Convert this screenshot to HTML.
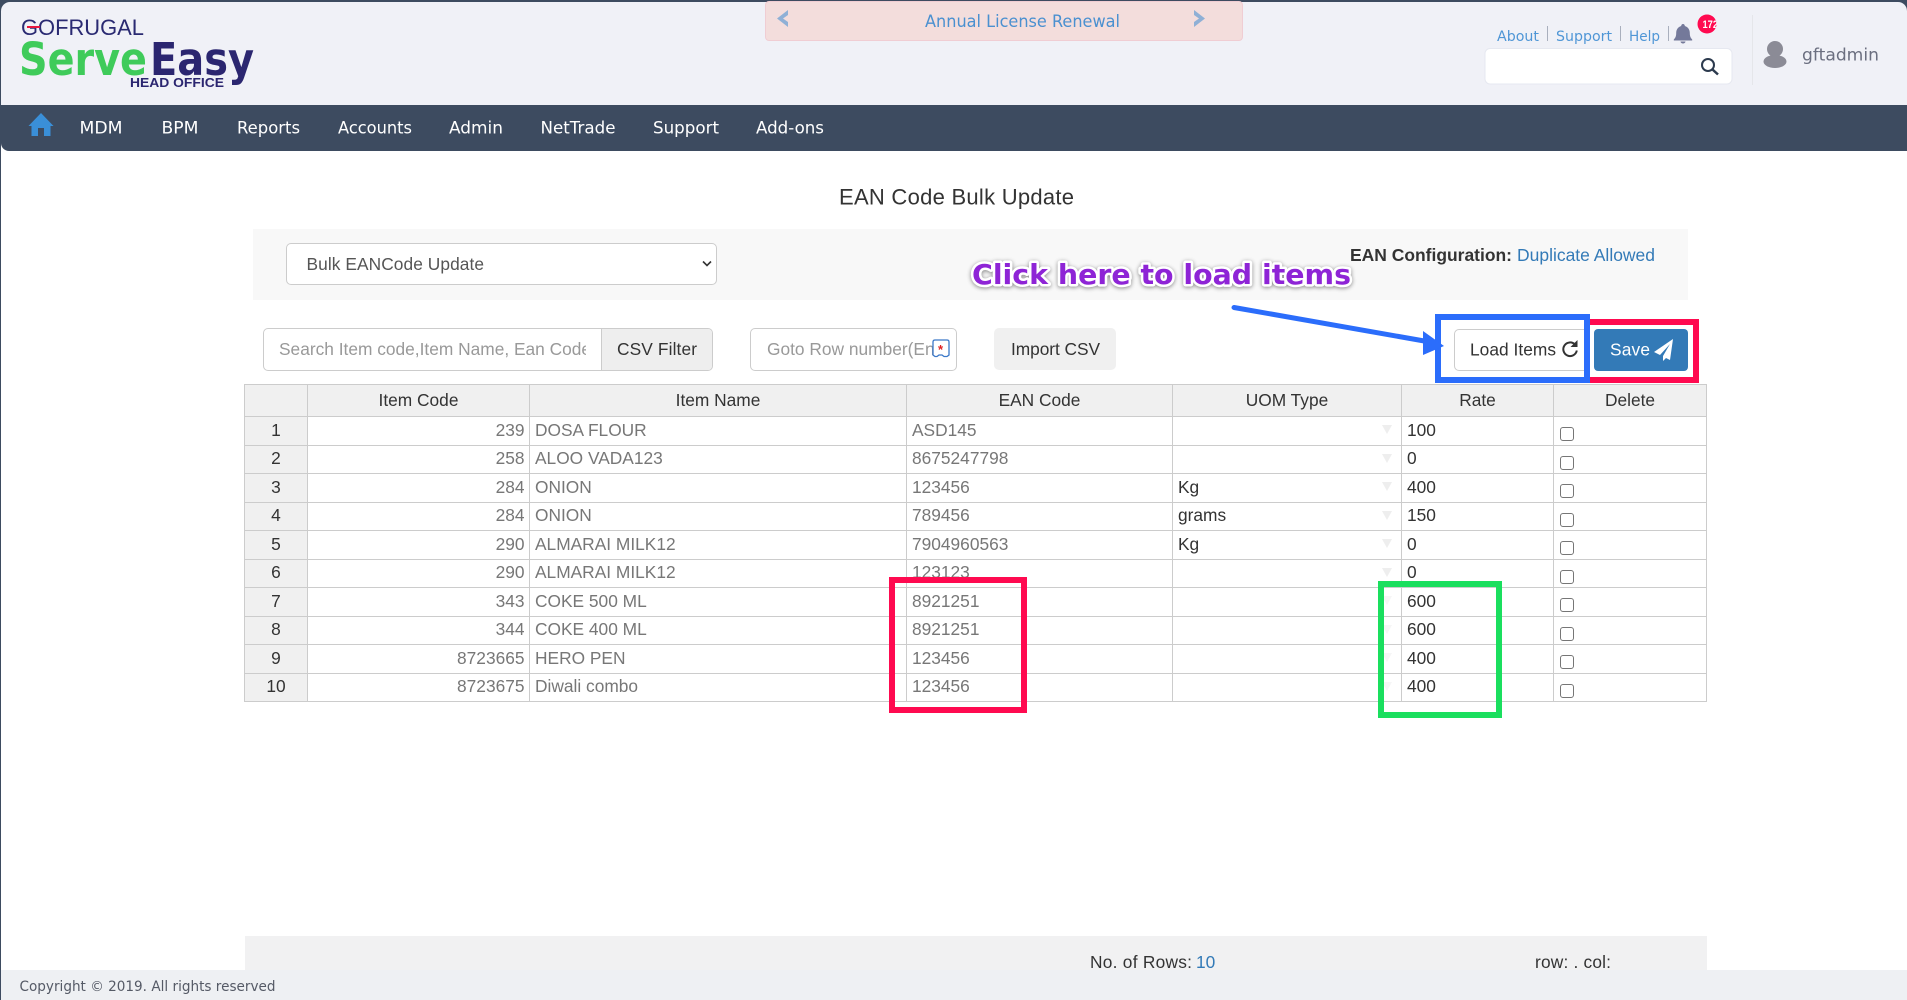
<!DOCTYPE html>
<html><head><meta charset="utf-8"><title>EAN Code Bulk Update</title>
<style>
html,body{margin:0;padding:0;width:1907px;height:1000px;overflow:hidden;background:#fff;font-family:"Liberation Sans",Arial,sans-serif;color:#333}
.a{position:absolute;box-sizing:border-box}
svg{position:absolute;left:0;top:0;overflow:visible}
table{position:absolute;left:244px;top:384px;border-collapse:collapse;table-layout:fixed;width:1462px;font-size:17.33px}
td,th{border:1.3px solid #ccc;padding:0 5px;overflow:hidden;white-space:nowrap;position:relative;font-weight:400;box-sizing:border-box}
td>span{position:relative;top:-1px}
th{background:#f0f0f0;text-align:center;color:#333;height:32px}
td.n{background:#f0f0f0;text-align:center;color:#333}
td.r{text-align:right;color:#777;padding-right:4.5px}
td.g{color:#777}
td i{position:absolute;left:209px;top:8px;width:0;height:0;border-left:5px solid transparent;border-right:5px solid transparent;border-top:9px solid #eee}
tr.f td i{border-top-color:#f6f6f6}
td b{position:absolute;left:6px;top:50%;margin-top:-4px;width:14px;height:14px;border:1.4px solid #767676;border-radius:3px;background:#fff;box-sizing:border-box}
tr.h1 td{height:29px}tr.h2 td{height:28px}
.ph{color:#999;font-size:17.33px;white-space:nowrap;overflow:hidden}
</style></head><body>
<div class="a" style="left:0;top:0;width:1907px;height:106px;background:#3d4b60"></div>
<div class="a" style="left:1px;top:2px;width:1906px;height:104px;background:#f0f1f7;border-radius:9px 9px 0 0"></div>
<div class="a" style="left:1px;top:105px;width:1906px;height:46px;background:#3d4b60;border-radius:0 0 0 8px"></div>
<div class="a" style="left:0;top:106px;width:1px;height:894px;background:#3d4b60"></div>

<div class="a" style="left:765px;top:1px;width:478px;height:40px;background:#f3dddc;border:1px solid #f0cdd3;border-radius:4px"></div>
<div class="a" style="left:253px;top:229px;width:1435px;height:71px;background:#f8f8f8"></div>
<div class="a" style="left:286px;top:243px;width:431px;height:42px;background:#fff;border:1px solid #ccc;border-radius:5px"></div>
<div class="a" style="left:263px;top:328px;width:450px;height:43px;background:#fff;border:1px solid #ccc;border-radius:5px;overflow:hidden"><div class="a" style="left:337px;top:0;width:113px;height:43px;background:#eee;border-left:1px solid #ccc"></div></div>
<div class="a" style="left:750px;top:328px;width:207px;height:43px;background:#fff;border:1px solid #ccc;border-radius:5px"></div>
<div class="a" style="left:994px;top:328px;width:122px;height:42px;background:#f0f0f0;border-radius:5px"></div>
<div class="a" style="left:1454px;top:329px;width:136px;height:42px;background:#fff;border:1px solid #ccc;border-radius:5px"></div>
<div class="a" style="left:1594px;top:329px;width:94px;height:42px;background:#337ab7;border-radius:4px"></div>

<div class="a ph" style="left:279px;top:339px;width:307px;line-height:20px">Search Item code,Item Name, Ean Code</div>
<div class="a ph" style="left:767px;top:339px;width:172px;line-height:20px">Goto Row number(Enter)</div>

<table>
<colgroup><col style="width:63px"><col style="width:222px"><col style="width:377px"><col style="width:266px"><col style="width:229px"><col style="width:152px"><col style="width:153px"></colgroup>
<tr><th></th><th>Item Code</th><th>Item Name</th><th>EAN Code</th><th>UOM Type</th><th>Rate</th><th>Delete</th></tr>
<tr class="h1"><td class="n"><span>1</span></td><td class="r"><span>239</span></td><td class="g"><span>DOSA FLOUR</span></td><td class="g"><span>ASD145</span></td><td><i></i></td><td><span>100</span></td><td><b></b></td></tr>
<tr class="h2"><td class="n"><span>2</span></td><td class="r"><span>258</span></td><td class="g"><span>ALOO VADA123</span></td><td class="g"><span>8675247798</span></td><td><i></i></td><td><span>0</span></td><td><b></b></td></tr>
<tr class="h1"><td class="n"><span>3</span></td><td class="r"><span>284</span></td><td class="g"><span>ONION</span></td><td class="g"><span>123456</span></td><td><span>Kg</span><i></i></td><td><span>400</span></td><td><b></b></td></tr>
<tr class="h2"><td class="n"><span>4</span></td><td class="r"><span>284</span></td><td class="g"><span>ONION</span></td><td class="g"><span>789456</span></td><td><span>grams</span><i></i></td><td><span>150</span></td><td><b></b></td></tr>
<tr class="h1"><td class="n"><span>5</span></td><td class="r"><span>290</span></td><td class="g"><span>ALMARAI MILK12</span></td><td class="g"><span>7904960563</span></td><td><span>Kg</span><i></i></td><td><span>0</span></td><td><b></b></td></tr>
<tr class="h2"><td class="n"><span>6</span></td><td class="r"><span>290</span></td><td class="g"><span>ALMARAI MILK12</span></td><td class="g"><span>123123</span></td><td><i></i></td><td><span>0</span></td><td><b></b></td></tr>
<tr class="h1 f"><td class="n"><span>7</span></td><td class="r"><span>343</span></td><td class="g"><span>COKE 500 ML</span></td><td class="g"><span>8921251</span></td><td><i></i></td><td><span>600</span></td><td><b></b></td></tr>
<tr class="h2 f"><td class="n"><span>8</span></td><td class="r"><span>344</span></td><td class="g"><span>COKE 400 ML</span></td><td class="g"><span>8921251</span></td><td><i></i></td><td><span>600</span></td><td><b></b></td></tr>
<tr class="h1 f"><td class="n"><span>9</span></td><td class="r"><span>8723665</span></td><td class="g"><span>HERO PEN</span></td><td class="g"><span>123456</span></td><td><i></i></td><td><span>400</span></td><td><b></b></td></tr>
<tr class="h2 f"><td class="n"><span>10</span></td><td class="r"><span>8723675</span></td><td class="g"><span>Diwali combo</span></td><td class="g"><span>123456</span></td><td><i></i></td><td><span>400</span></td><td><b></b></td></tr>
</table>

<div class="a" style="left:245px;top:936px;width:1462px;height:34px;background:#f1f1f2"></div>
<div class="a" style="left:1px;top:970px;width:1906px;height:30px;background:#eef0f3"></div>

<svg width="1907" height="1000" viewBox="0 0 1907 1000" font-family="Liberation Sans, Arial, sans-serif">
<!-- logo -->
<text x="21" y="35" font-size="22" fill="#2a2a72" textLength="123" lengthAdjust="spacingAndGlyphs">GOFRUGAL</text>
<rect x="27" y="26" width="13" height="2" fill="#e8173f"/>
<text x="19" y="75" font-family="DejaVu Sans, sans-serif" font-size="45" font-weight="700" fill="#3fcb5a" textLength="128" lengthAdjust="spacingAndGlyphs">Serve</text>
<text x="150" y="75" font-family="DejaVu Sans, sans-serif" font-size="45" font-weight="700" fill="#2b2670" textLength="104" lengthAdjust="spacingAndGlyphs">Easy</text>
<text x="130" y="87" font-size="12.5" font-weight="700" fill="#2b2670" textLength="94" lengthAdjust="spacingAndGlyphs">HEAD OFFICE</text>

<!-- banner -->
<path d="M788 10 L777 18.5 L788 27 L788 22 L783 18.5 L788 15Z" fill="#8fb0d6"/>
<path d="M1194 10 L1205 18.5 L1194 27 L1194 22 L1199 18.5 L1194 15Z" fill="#8fb0d6"/>
<text x="925" y="27" font-family="DejaVu Sans, sans-serif" font-size="16.5" fill="#4a90d0" textLength="195" lengthAdjust="spacingAndGlyphs">Annual License Renewal</text>

<!-- top right -->
<g font-family="DejaVu Sans, sans-serif" font-size="14.5" fill="#4f96d6">
<text x="1497" y="41" textLength="42" lengthAdjust="spacingAndGlyphs">About</text>
<text x="1556" y="41" textLength="56" lengthAdjust="spacingAndGlyphs">Support</text>
<text x="1629" y="41" textLength="31" lengthAdjust="spacingAndGlyphs">Help</text>
</g>
<g stroke="#a9afbd" stroke-width="1"><line x1="1547.5" y1="26" x2="1547.5" y2="41"/><line x1="1620.5" y1="26" x2="1620.5" y2="41"/><line x1="1668.5" y1="26" x2="1668.5" y2="41"/></g>
<path d="M1683 24 a1.8 1.8 0 0 1 1.8 2 c3.5 1 5 4 5 7 c0 3.5 1 5 2.4 6.5 v1 h-18.4 v-1 c1.4-1.500 2.400-3 2.400-6.500 c0-3 1.500-6 5-7 a1.800 1.800 0 0 1 1.800-2z M1680.500 41.500 h5 a2.500 2 0 0 1-5 0z" fill="#74799a"/>
<circle cx="1707" cy="24" r="9.500" fill="#ff0a50"/>
<clipPath id="bc"><circle cx="1707" cy="24" r="9.500"/></clipPath>
<text x="1702.500" y="28" font-size="11" font-weight="700" fill="#fff" clip-path="url(#bc)" textLength="15.500" lengthAdjust="spacingAndGlyphs">172</text>
<rect x="1485" y="48.500" width="247" height="35.500" rx="5" fill="#fff" stroke="#e6e8f0"/>
<circle cx="1708" cy="65" r="6" fill="none" stroke="#2c3a4e" stroke-width="2"/><line x1="1712.500" y1="69.500" x2="1718" y2="74.500" stroke="#2c3a4e" stroke-width="2.500"/>
<line x1="1752.500" y1="15" x2="1752.500" y2="85" stroke="#e5e6ea"/>
<circle cx="1775" cy="49" r="8" fill="#8b8b96"/><ellipse cx="1775" cy="61.500" rx="11.500" ry="6.500" fill="#8b8b96"/>
<text x="1802" y="60.500" font-family="DejaVu Sans, sans-serif" font-size="17" fill="#6b6f80" textLength="77" lengthAdjust="spacingAndGlyphs">gftadmin</text>

<!-- nav -->
<path d="M41 113 L53.500 126 H50.500 V136 H44 V128 H38 V136 H31.500 V126 H28.500Z" fill="#3a8fd8"/>
<g font-family="DejaVu Sans, sans-serif" font-size="16.600" fill="#fff">
<text x="79.500" y="133.500" textLength="43" lengthAdjust="spacingAndGlyphs">MDM</text>
<text x="161.500" y="133.500" textLength="37" lengthAdjust="spacingAndGlyphs">BPM</text>
<text x="237" y="133.500" textLength="63" lengthAdjust="spacingAndGlyphs">Reports</text>
<text x="338" y="133.500" textLength="74" lengthAdjust="spacingAndGlyphs">Accounts</text>
<text x="449" y="133.500" textLength="54" lengthAdjust="spacingAndGlyphs">Admin</text>
<text x="540.500" y="133.500" textLength="75" lengthAdjust="spacingAndGlyphs">NetTrade</text>
<text x="653" y="133.500" textLength="66" lengthAdjust="spacingAndGlyphs">Support</text>
<text x="756" y="133.500" textLength="68" lengthAdjust="spacingAndGlyphs">Add-ons</text>
</g>

<!-- content text -->
<text x="839" y="204.500" font-size="22" fill="#333" textLength="235">EAN Code Bulk Update</text>
<text x="306.500" y="270" font-size="17.330" fill="#555" textLength="177.500">Bulk EANCode Update</text>
<path d="M703 261.500 l4 4 l4-4" fill="none" stroke="#333" stroke-width="1.600"/>
<text x="1350" y="261" font-size="17.330" font-weight="700" fill="#333" textLength="162" lengthAdjust="spacingAndGlyphs">EAN Configuration:</text>
<text x="1517" y="261" font-size="17.330" fill="#337ab7" textLength="138" lengthAdjust="spacingAndGlyphs">Duplicate Allowed</text>
<text x="617" y="355" font-size="17.330" fill="#333" textLength="80">CSV Filter</text>
<text x="1011" y="355" font-size="17.330" fill="#333" textLength="89">Import CSV</text>
<text x="1470" y="355.500" font-size="17.330" fill="#333" textLength="86">Load Items</text>
<text x="1610" y="355.500" font-size="17.330" fill="#fff" textLength="40">Save</text>
<!-- goto icon -->
<path d="M935 340 h12 q2 0 2 2 v13 l-2 1.500 h-3 l-2-1.500 h-3 l-2 1.500 h-2 l-2-1.500 v-13 q0-2 2-2z" fill="#fff" stroke="#3b78c8" stroke-width="1.300"/>
<text x="938" y="354" font-size="13" fill="#e02020" font-weight="700">*</text>
<!-- refresh -->
<path d="M1575 344.500 a6.800 6.800 0 1 0 1.800 6" fill="none" stroke="#333" stroke-width="2"/><path d="M1577.500 340 v7 h-7z" fill="#333"/>
<!-- plane -->
<path d="M1673 339 L1654 352 L1660 355 L1670 344 L1663 356 L1663 361 L1666 358 L1670 360Z" fill="#fff"/>

<!-- footer text -->
<text x="1090" y="968" font-size="17.330" fill="#333" textLength="102">No. of Rows:</text>
<text x="1196" y="968" font-size="17.330" fill="#337ab7">10</text>
<text x="1535" y="968" font-size="17.330" fill="#333" textLength="76">row: . col:</text>
<text x="19.500" y="991" font-family="DejaVu Sans, sans-serif" font-size="14" fill="#555a66" textLength="256" lengthAdjust="spacingAndGlyphs">Copyright © 2019. All rights reserved</text>

<!-- annotations -->
<rect x="892" y="580" width="132" height="130" fill="none" stroke="#ff0a50" stroke-width="6"/>
<rect x="1381" y="584" width="118" height="131" fill="none" stroke="#1adf5e" stroke-width="6"/>
<path d="M1590 322 H1696 V380 H1590" fill="none" stroke="#ff0a50" stroke-width="6"/>
<rect x="1438" y="317" width="149" height="63" fill="none" stroke="#2b6dfb" stroke-width="6"/>
<line x1="1234" y1="307.500" x2="1430" y2="342" stroke="#2b6dfb" stroke-width="5" stroke-linecap="round"/>
<path d="M1444 346 L1423 331 L1423 355Z" fill="#2b6dfb"/>
<text x="972" y="284" font-family="DejaVu Sans, sans-serif" font-size="28" font-weight="700" fill="#8e24d6" stroke="#fff" stroke-width="5" stroke-linejoin="round" paint-order="stroke" textLength="379" lengthAdjust="spacingAndGlyphs" style="filter:drop-shadow(0 1px 2px rgba(0,0,0,.45))">Click here to load items</text>
</svg>
</body></html>
